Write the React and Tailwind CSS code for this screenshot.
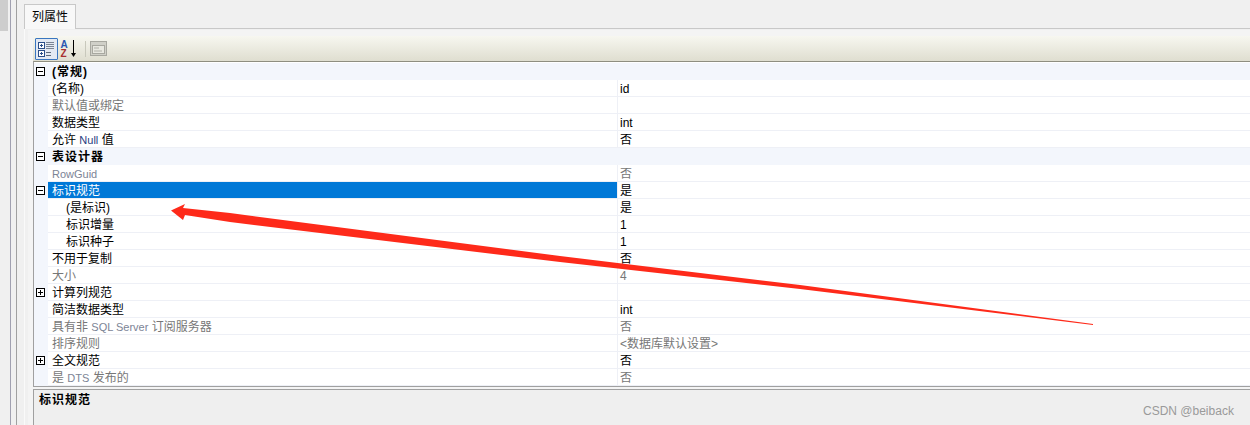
const Lat = ({ children }) => <span className="text-[11px] text-[#27407f]">{children}</span>;
const LatDim = ({ children }) => <span className="text-[11px] text-[#7c8496]">{children}</span>;

const rows = [
  { k: "(常规)", v: "", head: true, icon: "minus" },
  { k: "(名称)", v: "id" },
  { k: "默认值或绑定", v: "", dim: true },
  { k: "数据类型", v: "int" },
  { k: <>允许 <Lat>Null</Lat> 值</>, v: "否" },
  { k: "表设计器", v: "", head: true, icon: "minus" },
  { k: <LatDim>RowGuid</LatDim>, v: "否", dim: true },
  { k: "标识规范", v: "是", sel: true, icon: "minus" },
  { k: "(是标识)", v: "是", sub: true },
  { k: "标识增量", v: "1", sub: true },
  { k: "标识种子", v: "1", sub: true },
  { k: "不用于复制", v: "否" },
  { k: "大小", v: "4", dim: true },
  { k: "计算列规范", v: "", icon: "plus" },
  { k: "简洁数据类型", v: "int" },
  { k: <>具有非 <LatDim>SQL Server</LatDim> 订阅服务器</>, v: "否", dim: true },
  { k: "排序规则", v: "<数据库默认设置>", dim: true },
  { k: "全文规范", v: "否", icon: "plus" },
  { k: <>是 <LatDim>DTS</LatDim> 发布的</>, v: "否", dim: true },
];

function Box({ plus }) {
  return (
    <svg width="9" height="9" viewBox="0 0 9 9" className="block">
      <rect x="0.5" y="0.5" width="8" height="8" fill="#fff" stroke="#000" />
      <path d="M2 4.5H7" stroke="#000" />
      {plus && <path d="M4.5 2V7" stroke="#000" />}
    </svg>
  );
}

function Row({ r }) {
  return (
    <div className={`flex h-[17px] ${r.head ? "bg-[#f3f6fc]" : ""}`}>
      <div className="flex w-[14px] shrink-0 items-center justify-start bg-[#f3f6fc] pb-px pl-[2px]">
        {r.icon && <Box plus={r.icon === "plus"} />}
      </div>
      <div
        className={`flex w-[569px] shrink-0 items-center border-b border-[#eef0f6] pt-px ${r.sub ? "pl-[18px]" : "pl-[4px]"} ${r.sel ? "bg-[#0078d7] text-white" : ""} ${r.head ? "border-transparent font-bold tracking-[1px]" : ""} ${r.dim ? "text-[#777777]" : ""}`}
      >
        <span className="whitespace-pre">{r.k}</span>
      </div>
      <div
        className={`flex flex-1 items-center border-b pl-[2px] pt-px ${r.head ? "border-transparent" : "border-l border-[#eef0f6]"} ${r.dim ? "text-[#777777]" : "text-black"}`}
      >
        <span className="whitespace-pre">{r.v}</span>
      </div>
    </div>
  );
}

export default function App() {
  return (
    <div className="relative flex h-[425px] w-[1250px] overflow-hidden bg-[#f0f0f0] font-['Liberation_Sans','Noto_Sans_CJK_SC',sans-serif] text-[12px] text-black">
      <div className="h-[31px] w-[8px] shrink-0 bg-[#cdcdcd]" />
      <div className="ml-[2px] h-full w-px shrink-0 bg-[#a0a0b0]" />
      <div className="ml-[5px] h-full w-px shrink-0 bg-[#a0a0a0]" />
      <div className="flex min-w-0 flex-1 flex-col pl-[7px]">
        <div className="flex h-[29px] shrink-0 items-end border-b border-[#c8c8c8]">
          <div className="mb-[-1px] flex h-[25px] w-[52px] items-center justify-center border border-b-0 border-[#c8c8c8] bg-[#f8f8f8] pb-px text-[12px]">
            列属性
          </div>
        </div>
        <div className="flex min-h-0 flex-1 flex-col border-l border-[#fafafa] pl-[3px] pt-px">
          <div className="flex min-h-0 flex-1 flex-col bg-[#f4f4f4] pl-[5px] pt-[6px]">
            <div className="flex h-[25px] shrink-0 items-center bg-gradient-to-b from-[#f7f7f0] to-[#dfded0] pl-[2px]">
              <div className="flex h-[22px] w-[23px] items-center justify-center rounded-[1px] border border-[#3a76c0] bg-[#e3e9f3]">
                <svg width="17" height="16" viewBox="0 0 17 16">
                  <rect x="0.5" y="1.5" width="6" height="6" fill="#fff" stroke="#2c4f8a" />
                  <path d="M2 4.5H5M3.5 3V6" stroke="#2c4f8a" />
                  <rect x="0.5" y="9.5" width="6" height="6" fill="#fff" stroke="#2c4f8a" />
                  <path d="M2 12.5H5M3.5 11V14" stroke="#2c4f8a" />
                  <path d="M8 1.5H16M8 3.5H16M8 5.5H16M8 7.5H16" stroke="#7a8494" />
                  <path d="M8 11.5H13M8 14.5H13" stroke="#5f6b7c" />
                </svg>
              </div>
              <svg className="ml-[2px]" width="18" height="20" viewBox="0 0 18 20">
                <text x="0.5" y="9" fontSize="10" fontWeight="700" fill="#2a56b0" fontFamily="Liberation Sans">A</text>
                <text x="0.5" y="18" fontSize="10" fontWeight="700" fill="#a83030" fontFamily="Liberation Sans">Z</text>
                <path d="M13.5 1V15" stroke="#000" />
                <path d="M11 14L13.5 18L16 14Z" fill="#000" />
              </svg>
              <div className="ml-[7px] h-[16px] w-px bg-[#c8c8bc]" />
              <svg className="ml-[4px]" width="17" height="15" viewBox="0 0 17 15">
                <rect x="0.5" y="0.5" width="16" height="14" fill="#d0d0c8" stroke="#a8a8a0" />
                <rect x="2.5" y="4.5" width="12" height="8" fill="#e8e8e0" stroke="#a8a8a0" />
                <path d="M4 7H9M4 10H12" stroke="#b0b0a8" />
              </svg>
            </div>
            <div className="shrink-0 border-y border-l border-t-[#8e8e80] border-b-[#a0a0a0] border-l-[#a0a0a0] bg-white pt-px">
              {rows.map((r, i) => (
                <Row key={i} r={r} />
              ))}
            </div>
            <div className="mt-[2px] min-h-0 flex-1 border-l border-t border-[#a0a0a0] bg-[#efefef] pl-[5px] pt-px font-bold tracking-[1px]">
              标识规范
            </div>
          </div>
        </div>
      </div>
      <svg className="pointer-events-none absolute left-0 top-0" width="1250" height="425" viewBox="0 0 1250 425">
        <path d="M171 210.5L185 204L183 208L230 213L560 256L800 285L1093 324L1093 325L800 289L560 262L230 222L185 215L183 220Z" fill="#fe2a1a" />
      </svg>
      <div className="absolute left-[1143px] top-[402px] font-['Liberation_Sans',sans-serif] text-[12px] text-[#9a9a9a]">CSDN @beiback</div>
    </div>
  );
}
